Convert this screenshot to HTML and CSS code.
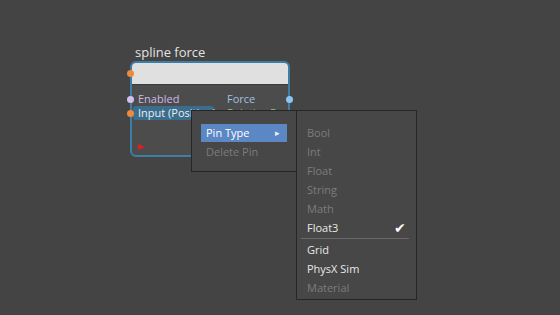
FILE: index.html
```html
<!DOCTYPE html>
<html lang="en">
<head>
    <meta charset="UTF-8">
    <title>Node Editor</title>
    <link rel="stylesheet" href="styles.css">
</head>
<body>
    <div class="canvas">
        <div class="node">
            <div class="node-title">spline force</div>
            <div class="node-box">
                <div class="node-header"><span class="pin pin-orange pin-left"></span></div>
                <div class="node-body">
                    <div class="row">
                        <span class="pin pin-lilac pin-left"></span>
                        <span class="label enabled">Enabled</span>
                        <span class="label force">Force</span>
                        <span class="pin pin-blue pin-right"></span>
                    </div>
                    <div class="row">
                        <span class="pin pin-orange pin-left"></span>
                        <span class="label input">Input (Position)</span>
                        <span class="label relative">Relative Pos</span>
                    </div>
                    <div class="flag"></div>
                </div>
            </div>
        </div>

        <div class="menu main-menu">
            <div class="item active">Pin Type <span class="arrow">&#9656;</span></div>
            <div class="item disabled">Delete Pin</div>
        </div>

        <div class="menu sub-menu">
            <div class="item disabled">Bool</div>
            <div class="item disabled">Int</div>
            <div class="item disabled">Float</div>
            <div class="item disabled">String</div>
            <div class="item disabled">Math</div>
            <div class="item checked">Float3 <span class="check">&#10004;</span></div>
            <div class="sep"></div>
            <div class="item">Grid</div>
            <div class="item">PhysX Sim</div>
            <div class="item disabled">Material</div>
        </div>
    </div>
</body>
</html>
```

FILE: styles.css
```css
body {
    margin: 0;
    background-color: #444444;
    font-family: "Open Sans", "Noto Sans", sans-serif;
    font-size: 11px;
}

.canvas {
    position: relative;
    width: 560px;
    height: 315px;
    overflow: hidden;
}

.node {
    position: absolute;
    left: 130px;
    top: 43px;
    width: 160px;
}

.node-title {
    color: #e2e2e2;
    font-size: 13px;
    padding-left: 5px;
    height: 18px;
    line-height: 18px;
}

.node-box {
    border: 2px solid #3c7ea6;
    border-radius: 6px;
    background-color: #4c4c4c;
    height: 92px;
}

.node-header {
    position: relative;
    height: 21px;
    background-color: #e0e0e0;
    border-radius: 4px 4px 0 0;
    border-bottom: 1px solid #3a3a3a;
}

.node-body {
    position: relative;
    padding-top: 7px;
}

.row {
    position: relative;
    display: flex;
    height: 14px;
    align-items: center;
}

.label {
    line-height: 14px;
    white-space: nowrap;
}

.enabled {
    color: #cdb8e8;
    padding-left: 6px;
    width: 89px;
}

.force {
    color: #9ec0e4;
}

.input {
    color: #e6eef4;
    background-color: #3d6d8c;
    border-radius: 3px;
    padding-left: 5px;
    width: 76px;
    margin-left: 1px;
}

.relative {
    color: #8fc08a;
    margin-left: 13px;
}

.pin {
    position: absolute;
    width: 7px;
    height: 7px;
    border-radius: 50%;
    top: 50%;
    margin-top: -3.5px;
}

.pin-left {
    left: -5px;
}

.pin-right {
    right: -5px;
}

.pin-orange {
    background-color: #ef8a3c;
}

.pin-lilac {
    background-color: #d2c0ee;
}

.pin-blue {
    background-color: #8cc4f4;
}

.flag {
    position: absolute;
    left: 6px;
    top: 59px;
    width: 0;
    height: 0;
    border-top: 3px solid transparent;
    border-bottom: 3px solid transparent;
    border-left: 7px solid #e02020;
}

.menu {
    position: absolute;
    background-color: #474747;
    border: 1px solid #262626;
    box-sizing: border-box;
}

.main-menu {
    left: 191px;
    top: 110px;
    width: 106px;
    height: 62px;
    padding: 13px 9px 0 9px;
}

.sub-menu {
    left: 296px;
    top: 110px;
    width: 121px;
    height: 190px;
    padding: 12px 5px 0 4px;
}

.item {
    position: relative;
    height: 19px;
    line-height: 19px;
    padding-left: 5px;
    color: #e8e8e8;
}

.main-menu .item {
    height: 18px;
    line-height: 18px;
    margin-bottom: 1px;
}

.sub-menu .item {
    padding-left: 6px;
}

.item.active {
    background-color: #5b87c4;
    color: #ffffff;
}

.item.disabled {
    color: #7c7c7c;
}

.arrow {
    position: absolute;
    right: 7px;
    top: 0;
    font-size: 9px;
    color: #f0f0f0;
}

.check {
    position: absolute;
    right: 5px;
    top: 0;
    font-size: 14px;
    color: #ffffff;
}

.sep {
    height: 1px;
    background-color: #6a6a6a;
    margin: 1px 2px 1px 0;
}
```
